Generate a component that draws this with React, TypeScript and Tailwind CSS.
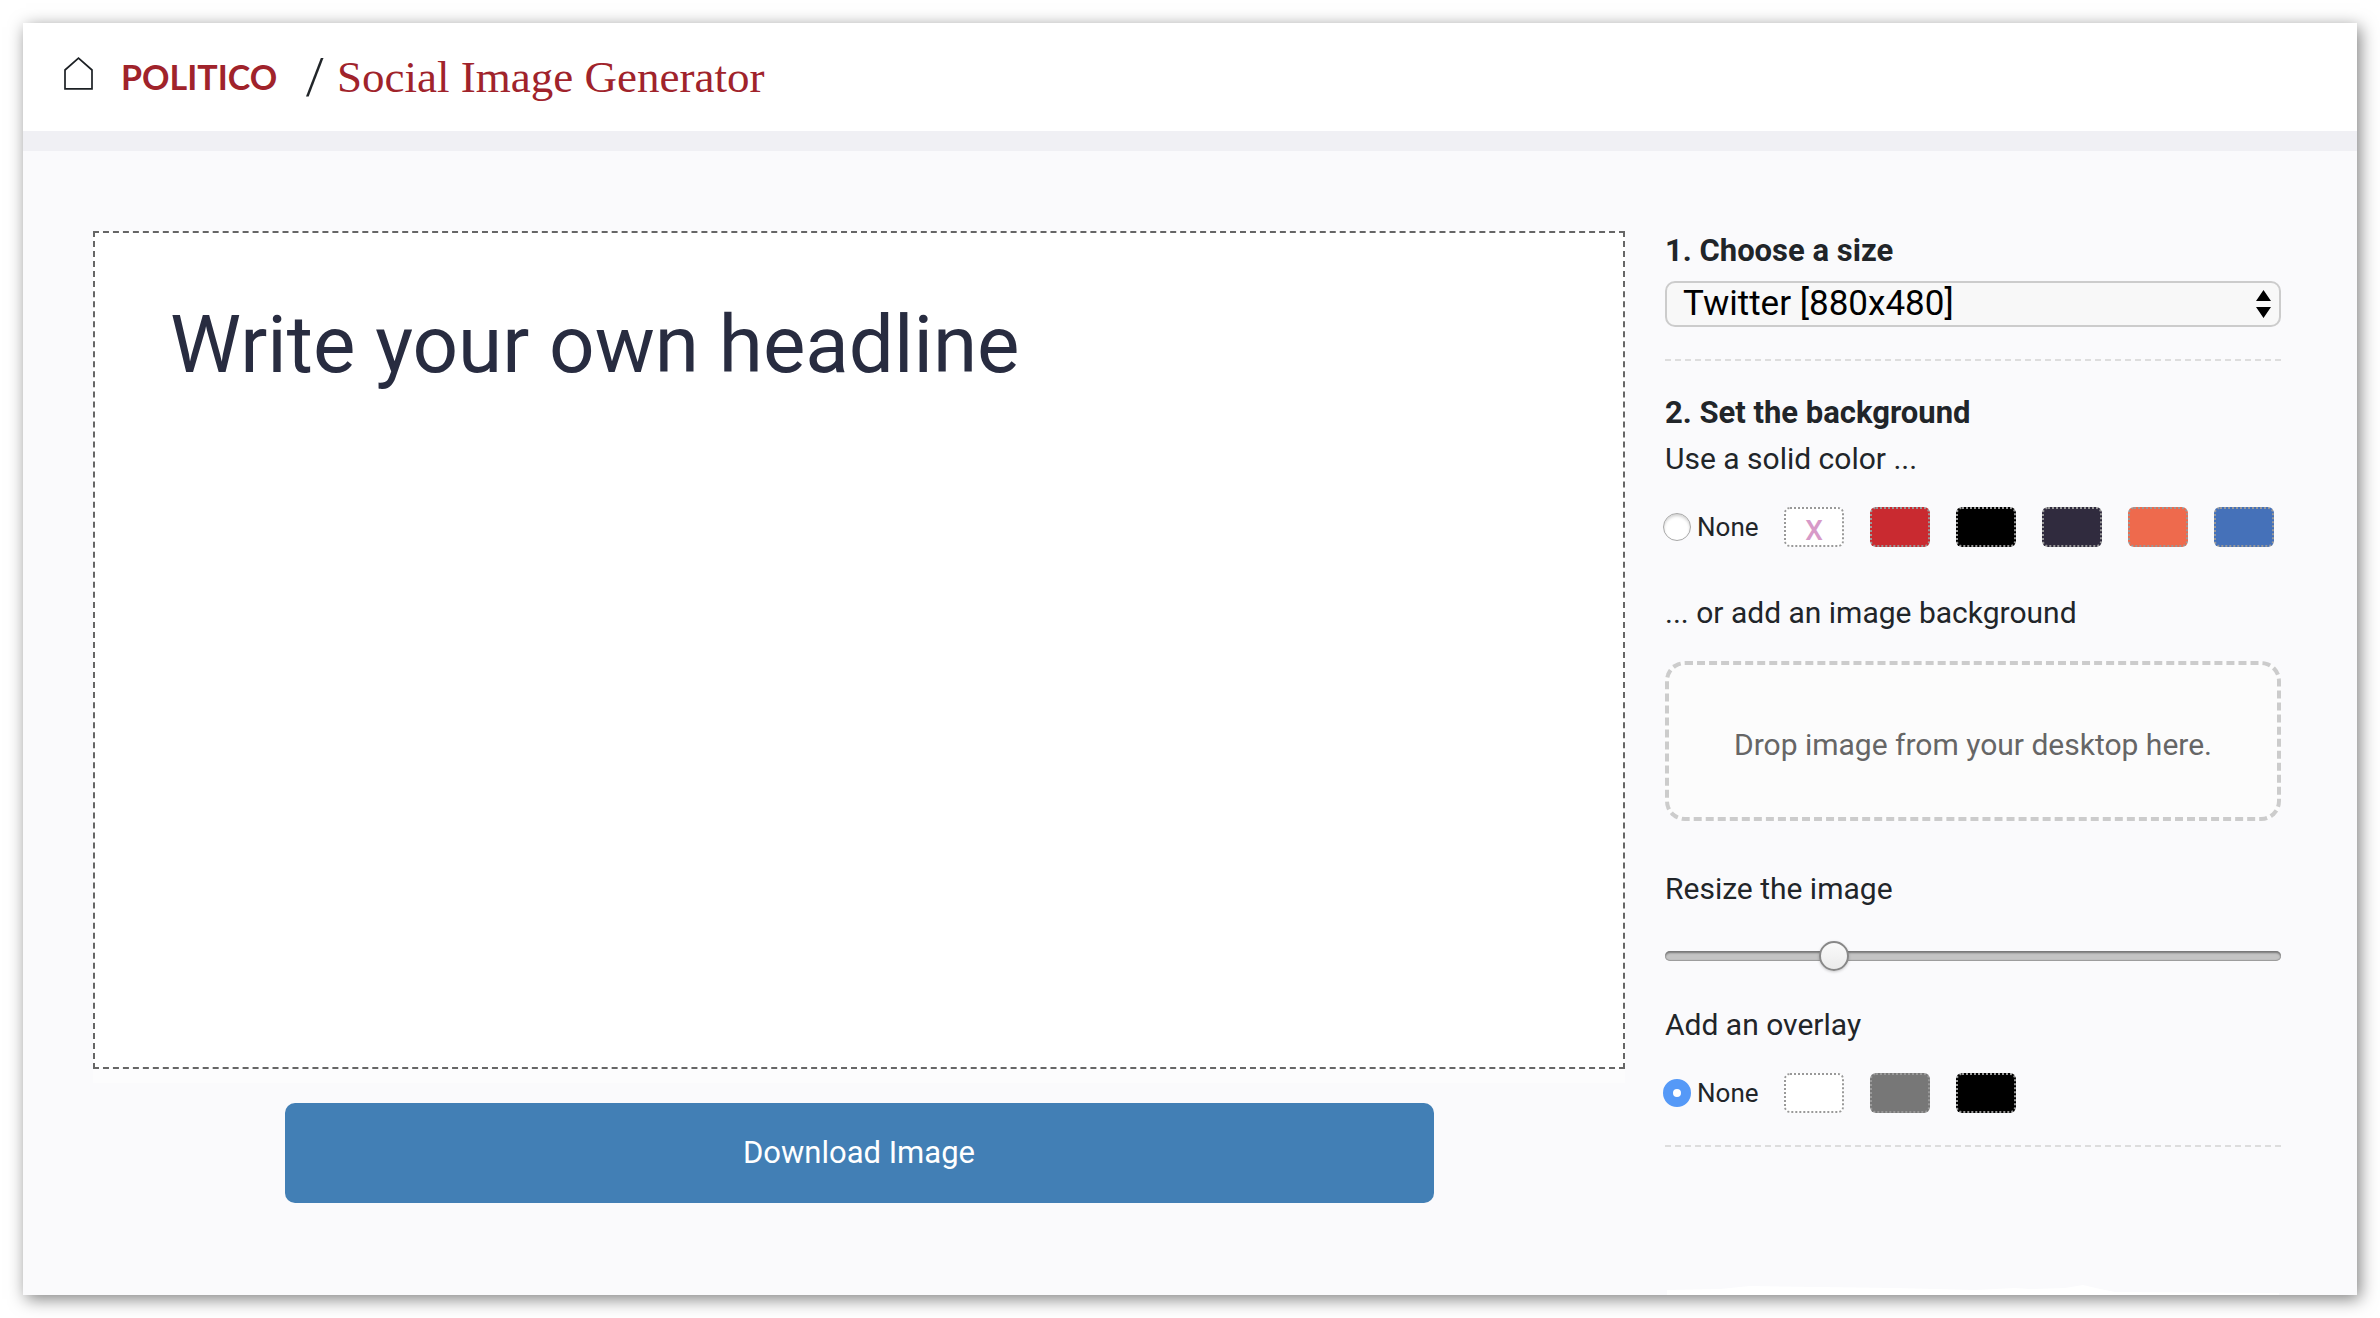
import type { ReactNode } from "react";

type Swatch = { name: string; color: string; mark?: string };

const backgrounds: Swatch[] = [
  { name: "Transparent", color: "bg-white", mark: "X" },
  { name: "Red", color: "bg-[#c92a30]" },
  { name: "Black", color: "bg-black" },
  { name: "Navy", color: "bg-[#302b3e]" },
  { name: "Orange", color: "bg-[#ee6a4d]" },
  { name: "Blue", color: "bg-[#4571b9]" },
];

const overlays: Swatch[] = [
  { name: "White", color: "bg-white" },
  { name: "Gray", color: "bg-[#777777]" },
  { name: "Black", color: "bg-black" },
];

function HomeIcon() {
  return (
    <svg width="29" height="33" viewBox="0 0 29 33" fill="none" stroke="#1c2024" strokeWidth="1.7" aria-hidden="true">
      <path d="M1 13 L14.5 1.2 L28 13 V31.8 H1 Z" />
    </svg>
  );
}

function SwatchRow({ group, swatches, noneChecked }: { group: string; swatches: Swatch[]; noneChecked?: boolean }) {
  return (
    <div role="radiogroup" aria-label={group} className="mt-7 -ml-0.5 flex h-10 items-center">
      <label className="flex w-[121px] shrink-0 items-center gap-1.5 text-[26px] leading-10">
        <input
          type="radio"
          name={group}
          defaultChecked={noneChecked}
          className="m-0 size-7 appearance-none rounded-full border border-[#a8a8a8] bg-white shadow-[inset_0_2px_3px_rgba(0,0,0,0.18)] checked:border-[10px] checked:border-[#5599f7] checked:shadow-none"
        />
        None
      </label>
      <div className="flex gap-[26px]">
        {swatches.map((s) => (
          <label
            key={s.name}
            className={`relative flex h-10 w-[60px] items-end justify-center rounded-md border-2 border-dotted border-[#999999] text-[28px] leading-7 font-medium text-[#d79ac8] ${s.color}`}
          >
            <input type="radio" name={group} aria-label={s.name} className="sr-only" />
            {s.mark}
          </label>
        ))}
      </div>
    </div>
  );
}

function Label({ children, className, htmlFor }: { children: ReactNode; className: string; htmlFor?: string }) {
  return (
    <label htmlFor={htmlFor} className={`block text-[30px] leading-10 ${className}`}>
      {children}
    </label>
  );
}

export default function App() {
  return (
    <div className="flex min-h-screen bg-white p-[23px] font-['Roboto',sans-serif] text-[#212529]">
      <div className="flex flex-1 flex-col bg-[#fafafc] shadow-[3px_4px_16px_rgba(0,0,0,0.5)]">
        <header className="flex h-32 items-center border-b-20 border-[#f0f0f4] bg-white pl-[41px]">
          <a href="#home" aria-label="Home" className="pb-2">
            <HomeIcon />
          </a>
          <a href="#politico" className="ml-7 font-['Lato',sans-serif] text-[34px] leading-10 font-bold text-[#a0232b]">
            POLITICO
          </a>
          <span className="ml-7 text-[50px] leading-none font-light">/</span>
          <h1 className="ml-3 font-['Liberation_Serif',serif] text-[45px] leading-none text-[#a0232b]">Social Image Generator</h1>
        </header>

        <main className="flex flex-1 items-stretch gap-10 pt-20 pr-[76px] pl-[70px]">
          <section className="flex-1">
            <div className="bg-[#fcfcfd] pb-3.5">
              <textarea
                aria-label="Headline"
                defaultValue="Write your own headline"
                className="block aspect-[1532/838] w-full resize-none border-2 border-dashed border-[#666666] bg-white px-[75px] pt-16 text-[80px] leading-[96px] text-[#282c40] outline-none"
              />
            </div>
            <button type="button" className="mx-auto mt-5 block h-[100px] w-3/4 rounded-[10px] bg-[#427fb5] text-[31px] text-white">
              Download Image
            </button>
          </section>

          <aside className="flex w-[616px] shrink-0 flex-col">
            <label htmlFor="size" className="block text-[31px] leading-10 font-bold">
              1. Choose a size
            </label>
            <div className="relative mt-2.5">
              <select
                id="size"
                className="block h-[46px] w-full appearance-none rounded-[10px] border-2 border-[#cccccc] bg-[#f8f8f8] pl-4 text-[35px] leading-10 text-black"
              >
                <option>Twitter [880x480]</option>
              </select>
              <svg className="pointer-events-none absolute top-[9px] right-2.5" width="15" height="28" viewBox="0 0 15 28" aria-hidden="true">
                <path d="M7.5 0 L15 11 H0 Z M0 17 H15 L7.5 28 Z" />
              </svg>
            </div>
            <hr className="mt-8 border-t-2 border-dashed border-[#dddddd]" />

            <h2 className="mt-8 text-[31px] leading-10 font-bold">2. Set the background</h2>
            <p className="mt-1.5 text-[30px] leading-10">Use a solid color ...</p>
            <SwatchRow group="Background color" swatches={backgrounds} />

            <p className="mt-[46px] text-[30px] leading-10">... or add an image background</p>
            <button
              type="button"
              className="mt-7 h-40 w-full rounded-[20px] border-4 border-dashed border-[#cccccc] bg-[#fcfcfc] pt-2 text-[30px] leading-10 text-[#666666]"
            >
              Drop image from your desktop here.
            </button>

            <Label htmlFor="resize" className="mt-12">
              Resize the image
            </Label>
            <input
              id="resize"
              type="range"
              min="0"
              max="400"
              defaultValue="105"
              className="mt-8 block h-[30px] w-full appearance-none bg-transparent [&::-webkit-slider-runnable-track]:h-2.5 [&::-webkit-slider-runnable-track]:rounded-[5px] [&::-webkit-slider-runnable-track]:bg-[#c4c4c4] [&::-webkit-slider-runnable-track]:shadow-[inset_0_2px_2px_#777777,inset_0_-1px_1px_#999999] [&::-webkit-slider-thumb]:-mt-2.5 [&::-webkit-slider-thumb]:size-[30px] [&::-webkit-slider-thumb]:appearance-none [&::-webkit-slider-thumb]:rounded-full [&::-webkit-slider-thumb]:border-2 [&::-webkit-slider-thumb]:border-[#888888] [&::-webkit-slider-thumb]:bg-linear-to-b [&::-webkit-slider-thumb]:from-[#fafafa] [&::-webkit-slider-thumb]:to-[#ebebeb] [&::-webkit-slider-thumb]:shadow-[0_1px_3px_rgba(0,0,0,0.2)]"
            />

            <p className="mt-[34px] text-[30px] leading-10">Add an overlay</p>
            <SwatchRow group="Overlay" swatches={overlays} noneChecked />
            <hr className="mt-8 border-t-2 border-dashed border-[#dddddd]" />

            <svg className="mt-auto block h-2.5 w-full" viewBox="0 0 616 10" preserveAspectRatio="none" aria-hidden="true">
              <path fill="#ffffff" d="M2 10 V5 L55 4 L85 1 L230 3 L310 5 L350 3 L365 4 L400 3 L418 0 L435 4 L450 7 L614 8 V10 Z" />
            </svg>
          </aside>
        </main>
      </div>
    </div>
  );
}
